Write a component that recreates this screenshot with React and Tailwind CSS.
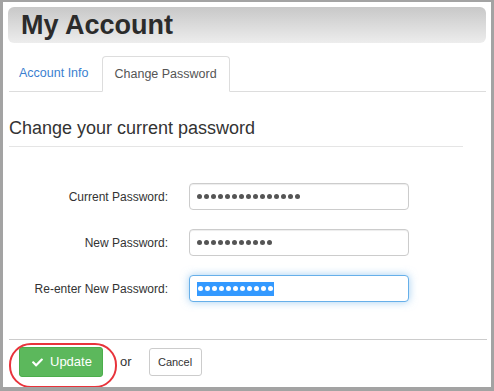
import React from 'react'

const font = { fontFamily: '"Liberation Sans", Arial, sans-serif' }

function Dots({ count, selected }) {
  const dots = Array.from({ length: count }, (_, i) => (
    <span
      key={i}
      className={`inline-block w-[5px] h-[5px] rounded-full ${selected ? 'bg-white' : 'bg-[#555]'}`}
    />
  ))
  if (selected) {
    return <span className="flex items-center gap-[2px] h-[14px] bg-[#3399ff] px-[1px]">{dots}</span>
  }
  return <span className="flex items-center gap-[2px]">{dots}</span>
}

function Field({ label, count, focused }) {
  return (
    <div className="flex items-center h-[27px]">
      <label className="w-[165px] text-right text-[12px] text-[#333]">{label}</label>
      <div
        className={`ml-[21px] w-[220px] h-[27px] rounded-[4px] border bg-white flex items-center pl-[7px] ${
          focused
            ? 'border-[#66afe9] shadow-[0_0_8px_rgba(102,175,233,0.6)]'
            : 'border-[#ccc] shadow-[inset_0_1px_1px_rgba(0,0,0,0.075)]'
        }`}
      >
        <Dots count={count} selected={focused} />
      </div>
    </div>
  )
}

function CheckIcon() {
  return (
    <svg width="11" height="9" viewBox="0 0 512 400" fill="white">
      <path d="M173.9 383.4l-166.4-166.4c-10-10-10-26.2 0-36.2l36.2-36.2c10-10 26.2-10 36.2 0L192 256.7 432.1 16.6c10-10 26.2-10 36.2 0l36.2 36.2c10 10 10 26.2 0 36.2l-294.4 294.4c-10 10-26.2 10-36.2 0z" />
    </svg>
  )
}

export default function App() {
  return (
    <div
      className="w-[494px] h-[391px] bg-white border-l-[3px] border-t-[2px] border-r-[3px] border-b-[4px] border-[#a3a3a3] flex flex-col overflow-hidden"
      style={font}
    >
      <div className="mt-[5px] mx-[5px] h-[36px] rounded-[6px] bg-gradient-to-b from-[#c8c8c8] to-[#ededed] flex items-center pl-[13px]">
        <h1 className="text-[27px] font-bold text-[#2b2b2b] leading-[36px]">My Account</h1>
      </div>

      <div className="mt-[14px] ml-[6px] mr-[5px] flex items-end border-b border-[#ddd] h-[35px]">
        <div className="h-[35px] flex items-center pl-[10px] pr-[13px] text-[12.5px] text-[#3b7fd0]">
          Account Info
        </div>
        <div className="h-[36px] -mb-px flex items-center px-[12px] border border-[#ddd] border-b-white rounded-t-[4px] bg-white text-[12.5px] text-[#555]">
          Change Password
        </div>
      </div>

      <h2 className="mt-[26px] ml-[6px] text-[18px] leading-[20px] text-[#333]">Change your current password</h2>
      <div className="mt-[8px] ml-[6px] mr-[28px] border-t border-[#e5e5e5]" />

      <div className="mt-[36px] flex flex-col gap-[19px]">
        <Field label="Current Password:" count={15} />
        <Field label="New Password:" count={11} />
        <Field label="Re-enter New Password:" count={11} focused />
      </div>

      <div className="mt-[37px] ml-[6px] mr-[4px] border-t border-[#ccc]" />

      <div className="relative mt-[7px] flex items-start">
        <button className="ml-[16px] w-[84px] h-[30px] rounded-[3px] bg-[#5cb85c] border border-[#4cae4c] flex items-center pl-[12px] text-[13px] text-white">
          <CheckIcon />
          <span className="ml-[7px]">Update</span>
        </button>
        <span className="ml-[17px] mt-[5px] text-[13px] text-[#333]">or</span>
        <button className="ml-[17px] mt-[1px] w-[53px] h-[28px] rounded-[3px] bg-white border border-[#ccc] text-[11px] text-[#333] flex items-center justify-center">
          Cancel
        </button>
        <div className="absolute left-[6px] top-[-4px] w-[108px] h-[45px] rounded-[22px] border-[2.5px] border-[#e8333b] pointer-events-none" />
      </div>
    </div>
  )
}
